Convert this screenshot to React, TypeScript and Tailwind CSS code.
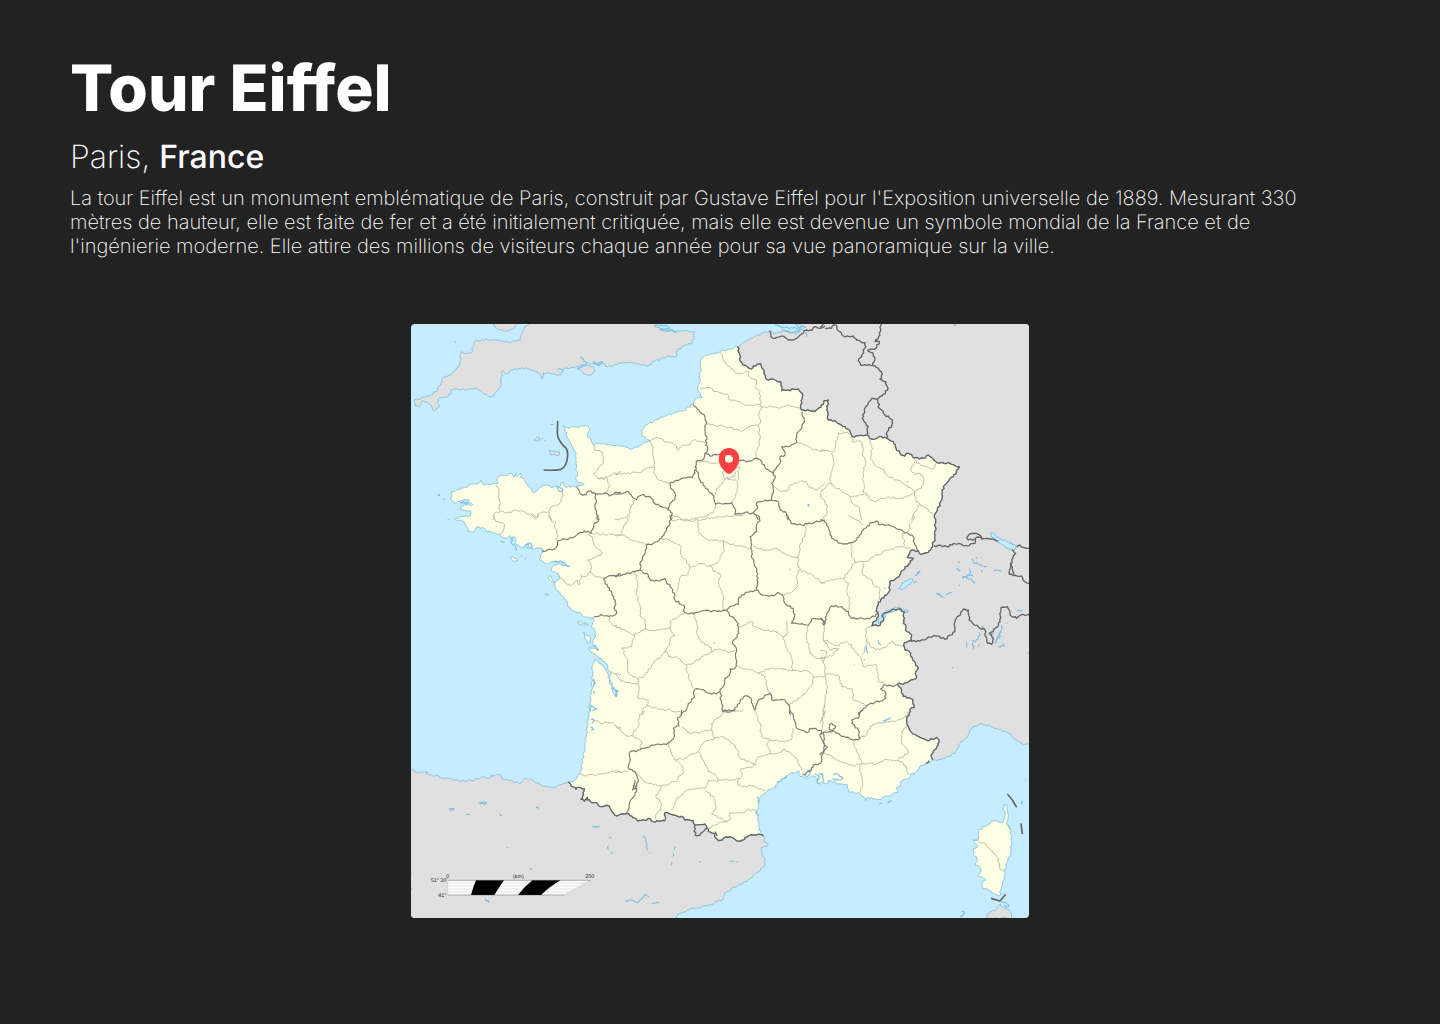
type Point = [number, number];

const parse = (text: string): Point[] =>
  text
    .trim()
    .split(/\s+/)
    .map((pair) => pair.split(",").map(Number) as Point);

const noise = (x: number, y: number) => {
  const n = Math.sin(x * 12.9898 + y * 78.233) * 43758.5453;
  return (n - Math.floor(n)) * 2 - 1;
};

// Breaks long segments into short irregular ones, as rivers and borders run.
const rough = (text: string, close = false) => {
  const points = parse(text);
  if (close) points.push(points[0]);
  const out: string[] = [];
  points.forEach(([x, y], i) => {
    out.push(`${x} ${y}`);
    const next = points[i + 1];
    if (!next) return;
    const dx = next[0] - x;
    const dy = next[1] - y;
    const length = Math.hypot(dx, dy);
    if (length > 160) return;
    const parts = Math.round(length / 6);
    for (let k = 1; k < parts; k++) {
      const t = k / parts;
      const shift = noise(x + k * 3, y + k * 5) * 3.2;
      out.push(
        `${(x + dx * t - (dy / length) * shift).toFixed(1)} ${(y + dy * t + (dx / length) * shift).toFixed(1)}`,
      );
    }
  });
  return `M${out.join("L")}`;
};

const COAST_WEST = `979,68 952,76 928,83 897,90 874,103 867,110 869,133 865,178 860,201 874,220 858,223 846,242 817,260 762,276 712,300 697,313 690,333 704,343 715,348 697,358 682,370 654,374 632,366 612,365 590,363 565,358 548,364 540,348 528,333 535,313 528,305 512,305 505,310 470,311 455,303 462,316 468,338 480,363 492,383 495,418 498,443 496,468 505,476 520,482 495,488 462,488 457,475 449,478 448,493 435,486 420,491 408,481 385,490 366,506 350,483 340,466 328,458 330,448 318,458 315,448 308,460 300,448 290,454 265,456 258,466 260,478 232,480 222,484 210,468 200,480 175,481 165,490 140,496 122,503 120,528 128,536 160,526 175,528 150,538 175,536 185,541 150,546 148,556 178,560 178,576 150,578 130,585 160,595 172,623 190,623 195,611 215,611 228,623 265,631 285,643 296,634 305,651 311,638 315,661 340,671 350,658 362,673 395,675 400,683 388,695 385,708 410,721 428,713 450,713 476,728 450,721 430,723 420,738 440,748 446,761 430,778 435,795 465,828 470,848 490,861 510,868 512,873 535,881 550,878 545,895 540,908 555,923 550,943 545,963 562,979 545,973 536,968 537,981 560,998 585,1018 597,1043 600,1073 608,1095 622,1100 616,1118 605,1098 595,1078 590,1048 575,1025 553,1005 547,1018 543,1073 535,1163 532,1188 522,1268 510,1338 500,1358 485,1373 471,1374`;
const PYRENEES = `471,1374 480,1386 492,1390 495,1396 505,1390 520,1394 518,1413 510,1426 520,1432 530,1420 528,1428 550,1436 575,1448 595,1446 600,1458 618,1476 630,1470 647,1468 662,1476 680,1491 707,1488 718,1484 727,1493 762,1490 762,1466 787,1473 817,1480 822,1488 847,1490 852,1503 882,1500 889,1513 892,1523 912,1531 915,1543 922,1550 937,1543 957,1538 982,1551 997,1548 1002,1540 1027,1533 1042,1530 1057,1536`;
const COAST_SOUTH = `1057,1536 1044,1518 1042,1478 1034,1468 1042,1448 1040,1428 1052,1413 1077,1396 1094,1390 1099,1378 1132,1353 1162,1340 1167,1358 1180,1360 1192,1363 1212,1356 1224,1380 1233,1372 1247,1380 1252,1370 1287,1380 1307,1380 1312,1403 1347,1408 1365,1430 1369,1420 1402,1426 1427,1416 1462,1406 1455,1393 1467,1388 1472,1370 1495,1363 1499,1350 1517,1343 1525,1328 1552,1316 1564,1308`;
const BORDER_EAST = `1564,1308 1560,1293 1582,1263 1584,1248 1577,1240 1549,1250 1527,1240 1502,1226 1489,1203 1487,1183 1495,1168 1497,1155 1509,1151 1505,1126 1477,1118 1470,1093 1460,1081 1487,1076 1517,1061 1514,1043 1522,1033 1505,1008 1499,988 1482,978 1479,958 1502,951 1502,933 1487,923 1485,908 1477,898 1481,883 1477,873 1480,863 1462,855 1442,857 1432,863 1417,870 1415,893 1402,906 1382,906 1385,895 1397,888 1402,873 1395,861 1402,835 1427,813 1437,798 1439,770 1457,761 1477,738 1507,703 1489,700 1502,678 1522,681 1527,690 1552,685 1565,668 1572,633 1574,593 1570,580 1577,563 1589,533 1597,488 1627,458 1645,428 1617,418 1577,415 1567,406 1552,393 1537,403 1510,402 1502,391 1487,388 1482,396 1470,393 1455,373 1447,353 1427,343 1412,338 1387,346 1367,333 1324,338 1317,320 1302,308 1272,290 1252,288 1247,258 1252,228 1239,230 1230,250 1212,263 1177,258 1169,253 1174,208 1162,195 1112,200 1109,173 1092,168 1067,166 1059,138 1050,120 1027,126 1020,135 997,123 987,110 987,93 979,68`;
const FRANCE = [COAST_WEST, PYRENEES, COAST_SOUTH, BORDER_EAST].join(" ");

const NEIGHBOURS = [
  `355,-6 335,23 328,48 295,56 265,48 230,46 190,53 185,83 170,88 150,83 147,118 135,138 120,151 95,163 90,178 80,198 55,216 30,223 10,228 12,246 28,246 32,231 50,235 62,246 70,260 85,246 80,238 88,220 100,220 120,210 122,196 145,198 185,194 210,200 235,218 250,216 258,200 268,188 270,168 275,140 283,151 305,138 345,131 370,140 390,156 392,165 397,146 430,150 450,153 455,138 440,136 490,130 520,122 545,118 560,124 575,118 590,128 630,118 662,115 710,128 727,113 772,96 797,96 795,83 817,66 844,56 850,23 817,20 792,23 752,16 730,6 745,-6`,
  `500,136 515,126 545,128 553,138 540,153 520,151`,
  `243,-2 262,16 285,20 305,16 318,-2`,
  `979,68 1012,48 1052,28 1075,21 1095,28 1120,18 1150,28 1175,16 1185,10 1150,-6 1870,-6 1870,1270 1855,1263 1827,1256 1787,1223 1757,1213 1709,1198 1677,1218 1667,1243 1647,1258 1632,1288 1602,1303 1564,1310 1400,1100 1100,300 950,160`,
  `-6,1328 12,1343 45,1345 70,1356 110,1363 150,1372 190,1368 215,1358 235,1362 240,1354 262,1351 278,1366 305,1371 325,1380 335,1368 358,1363 370,1371 400,1386 430,1390 471,1376 700,1400 1000,1500 1057,1536 1060,1553 1072,1560 1067,1568 1052,1570 1052,1588 1062,1603 1062,1623 1047,1640 1002,1673 947,1703 930,1731 882,1745 827,1760 797,1776 790,1790 -6,1790`,
  `1724,1782 1737,1763 1757,1756 1767,1740 1782,1753 1795,1758 1802,1782`,
  `368,348 375,343 383,338 387,348 376,352`,
  `416,379 430,382 444,381 444,394 430,391 418,391`,
];

const FRENCH_ISLES = [
  `1777,1442 1789,1444 1792,1480 1787,1500 1800,1520 1802,1560 1800,1590 1784,1620 1780,1665 1772,1690 1765,1716 1754,1712 1732,1700 1713,1688 1715,1670 1725,1668 1700,1655 1710,1640 1702,1625 1692,1622 1700,1610 1688,1590 1687,1575 1700,1565 1688,1548 1702,1545 1702,1520 1730,1502 1745,1490 1775,1495 1782,1475`,
  `300,699 308,698 320,710 308,712 300,706`,
  `412,760 422,758 430,775 420,772`,
  `500,892 530,901 530,904 502,898`,
  `518,924 538,940 540,955 530,958 520,942`,
  `401,810 410,809 413,814 403,814`,
];

type Tile = { x: number; y: number; region?: string; department?: string; nation?: string; water?: string };

const TILES: Tile[] = [
  {
    x: 0,
    y: -12,
    region: `497,500 505,515 515,526 525,524 533,513 550,518 575,522 590,520 595,528 612,518 630,516;553,520 556,540 552,560 556,580 560,600`,
    department: `548,376 550,390 570,395 578,410 577,430 560,450 546,462 560,475 590,478 594,500 585,515;560,475 590,472 605,462 630,456;255,495 265,505 262,530 268,550 265,575;245,600 250,580 268,575 300,578 310,570 330,572 345,580 365,582 375,592 385,580 415,575 420,560 440,555 452,545 455,515 445,500;415,575 412,590 425,600`,
    water: `132,65 135,69;418,314 427,313;392,354 396,356;402,361 404,364;80,526 86,524 84,529;97,537 100,539;508,111 525,125 520,135 500,148;545,125 555,130 575,125 570,132 548,133;145,545 165,552 175,545;435,500 450,515 455,505`,
  },
  {
    x: 612,
    y: -12,
    region: `234,254 252,270 270,290 275,305 270,330 275,350 272,375 278,385 270,400 285,408 300,403 320,405 345,402 370,420 385,420 395,425 425,415 440,425 450,442 475,460;475,460 485,440 495,430 495,410 510,405 500,380 525,378 545,368 545,345 560,325 568,300 562,275;270,400 262,420 243,425 240,440 250,460 255,480 270,500 285,518 297,530 302,553 330,550 350,548 362,570 360,583 390,578 415,578 428,565 425,548 445,543 470,541 470,530 475,510 470,490 480,475 475,460;470,541 490,545 495,570 510,575 520,600;243,440 240,460 232,472 200,475 180,482 165,490 167,505 180,520 180,540 165,550 160,570 172,580 168,600;0,522 20,522 40,515 48,525 65,538 80,525 105,530 118,550 140,560 160,570;415,578 425,590 430,600`,
    department: `316,95 325,120 345,140 360,158 385,160 400,155 405,172 425,180 420,200 435,215 435,240 440,260;255,207 285,203 300,215 340,225 345,240 370,245 390,255 435,255 440,262;440,262 470,260 500,262 515,255 540,262 557,265;440,262 432,280 437,300 430,320 435,345 430,380 420,400 428,415;275,312 310,318 345,322 380,335 400,322 430,315;103,360 115,380 115,410 118,440 115,455 125,475 140,482 165,490;100,362 130,352 145,362 175,370 190,390 200,378 225,375 235,360 270,368;0,462 40,458 70,458 90,448 118,440;0,600 25,595 45,580 50,555 60,540;168,600 200,600 235,598 275,590 297,572 302,553;245,422 280,425 310,432;297,530 305,505 325,485 330,475 365,480 370,500 362,530 352,548;330,475 322,460 330,450 355,450 372,440 370,465 372,480;335,470 340,478 358,470 360,455;545,368 575,375 595,390 630,393;475,500 500,515 520,510 525,495 550,487 575,485 578,495 600,510 630,490`,
    nation: `463,33 468,50 480,55 500,48 520,60 545,55 560,42 575,30 590,32 600,20 615,25 630,18`,
    water: `118,18 150,16 165,25 135,27 150,33 175,30 185,38;480,15 500,24 540,22 560,30;540,12 550,22 572,20;500,30 530,38 555,35;570,38 575,50;577,555 582,553 580,560`,
  },
  {
    x: 1227,
    y: -12,
    nation: `0,22 10,12;15,25 35,25 40,15 48,15 52,30 70,48 100,48 110,60 135,68 138,80 130,90 125,110 115,122 122,135 158,137 165,118 158,98 143,92 168,85 178,65 165,65 180,45 184,12;158,137 175,145 187,162 180,178 198,185 203,210 185,228 172,238;172,238 155,235 140,258 128,285 130,300 145,320 140,345;172,238 178,265 195,285 218,300 215,315 202,335 200,355`,
    department: `97,350 97,365 125,365 130,385 127,405 138,425 132,450 128,475 133,500 130,520;95,340 75,338 55,340 48,365 45,385 35,400 42,430 32,460 30,480 42,498;0,392 35,395;150,358 158,385 152,415 165,435 190,448 200,465 230,480 260,495 285,515;283,418 290,430 318,440 340,445 348,430;285,425 270,450 285,465 300,460 310,475 305,505 285,515 288,545;42,498 25,490 15,505 0,520 5,535 22,555 22,580 5,600;42,498 60,510 90,530 110,528 140,520 150,540 170,543 200,533 230,535 250,535 285,518;90,530 95,548 118,562 120,580 125,600;288,545 300,552 325,570 340,585;300,552 285,575 278,600`,
    water: `260,485 265,486;400,14 410,14`,
  },
  {
    x: 0,
    y: 573,
    region: `562,0 562,18 550,25 540,55 520,47 490,65 440,78 435,98 405,108 392,108;578,190 595,182 615,185 622,176 630,178;578,190 590,215 603,235 612,262 612,285 617,295 605,303 580,303 570,298 550,305`,
    department: `245,0 255,20 280,27 278,45 265,58;362,0 370,10 380,8 385,0;415,0 420,18 435,22 432,40 440,60 436,78;536,55 550,90 568,105 570,120 530,135 540,150 540,170 525,185 510,182 505,210 500,195 480,212 465,205 445,182;536,170 550,182 578,190;540,55 580,58 630,60;592,305 600,325 630,342;597,472 630,478`,
    water: `268,80 280,82;305,65 300,82 312,90 314,108;340,92 360,85 365,95 345,98;330,122 334,124;342,130 345,132;110,13 114,14;430,140 450,138 475,155;548,492 553,505 547,515 548,492;547,528 550,535 547,537;538,590 540,570 558,582 545,588;548,390 563,406;616,528 616,545;603,520 620,528`,
  },
  {
    x: 612,
    y: 573,
    region: `165,0 165,25 155,40 140,70 115,85 95,88 90,115 78,140 75,165 60,170 25,178 0,183;75,165 100,180 107,197 135,198 150,190 165,215 178,235 180,255 205,270 208,292 235,297 260,288 335,287;335,287 345,275 370,268 372,248 390,235 425,225 428,200 425,160 412,130 408,95 405,65 425,50 425,30 435,18 428,0;425,225 440,240 475,243 490,232 505,245 510,265 535,280 540,300 530,325 580,330 590,312 620,310 630,325;515,0 528,25 560,30 600,22 630,15;335,287 350,305 370,325 372,355 352,385 365,405 362,458 345,462 345,475 330,490 328,510 315,530 290,538 270,528 240,522 235,550 220,565 215,582 198,600;315,530 320,560 325,590 355,588 375,560 392,542 410,555 418,585 430,555 465,535 475,558 510,555 522,570 527,600`,
    department: `45,0 30,30 20,45 22,60 50,75 95,88;0,62 22,60;140,72 165,75 195,90 200,125 225,150 220,178 195,185 185,230;170,0 185,5 210,18 250,15 250,50 275,72 325,78 328,110 315,125 310,140 285,152 255,145 225,160;250,15 290,8 330,5 385,0;325,78 350,88 385,95 405,100;285,152 295,170 315,175 312,215 325,240 325,287;60,172 68,200 65,240 75,270 75,300 90,320 90,342;0,335 30,345 58,360 90,342 115,347 165,338 180,362 165,370 165,390 140,420 115,445 90,480 70,492 40,475 35,430 20,400 50,395 58,360;165,338 165,320 190,305 208,292;235,297 245,325 250,370 270,390 290,398 292,410;150,405 160,425 190,430 215,450 250,435 285,412 310,402 340,412 360,405;215,450 220,485 235,520;0,475 20,498 70,508 70,550 100,555 95,570 140,582 195,590;70,492 70,508;100,570 85,580 85,600;375,335 410,318 415,335 450,347 480,350 505,365 518,355 515,318;505,365 515,400 530,430 533,465;365,450 400,465 430,475 470,460 530,467 580,468 595,487 590,510 560,545 522,570;430,475 450,485 462,535;415,95 450,105 480,100 520,120 548,128 550,150 555,165 545,180 548,215 530,232 505,238;575,30 570,60 555,90 550,130;555,165 590,180 630,205;580,330 575,370 585,415 605,430 630,430;595,487 630,485;625,600 630,570`,
    water: `297,382 298,387;523,163 527,164;0,527 8,527;4,530 4,545`,
  },
  {
    x: 1227,
    y: 573,
    region: `0,15 20,25 35,70 70,88 85,85 110,75 125,50 150,25 170,18 180,30 200,30 220,35 245,45 280,65 285,90 295,108;0,310 8,315 10,330 15,325 20,295 35,272 65,275 85,290 95,310 130,312 165,305 172,290;115,600 140,572 165,562 198,550 195,530 182,522 190,510 220,515 233,508`,
    department: `95,80 95,120 105,140 70,190 0,203;105,142 135,140 200,105 240,95 272,98;130,145 128,180 155,195 165,215 180,220 180,240 172,262;70,190 85,205 80,230 90,265 85,290;278,0 265,50 245,55 255,92;85,0 120,20 130,30;15,320 10,375 25,380 50,392 80,378 100,400 120,425 130,455 170,450 175,500 195,505;155,333 138,340 140,390 125,420;140,375 155,398 180,405 195,398 215,378 225,390 252,390;10,375 30,405 55,400 40,420 0,430;0,405 20,410 10,440;0,430 15,450 15,475 55,480 65,515 95,520 100,555 140,572;15,475 22,520 15,560 10,600`,
    nation: `342,92 380,95 400,85 440,92 465,85 465,72 445,75 440,68 455,55 475,58 485,72 510,72 535,78;465,72 475,66 490,70;575,105 587,115 572,145 568,178 605,183 615,200 630,205;575,145 583,178;590,95 600,90 610,97 630,100;275,378 300,378 345,362 375,373 405,350 405,320 430,282 445,285 447,315 475,335 495,345 500,380 515,388 520,370 508,355 520,350 540,320 543,278 562,275 570,300 590,310 610,298 630,303`,
    water: `285,182 300,168 290,180 285,182;280,205 290,200;348,235 370,246 360,240 348,235;378,240 397,232;415,137 418,145;408,162 422,168;448,160 450,175 430,190 428,185 455,192 465,205;440,180 460,183;455,130 465,145 485,153 502,153;468,130 472,127;483,130 484,127;522,167 545,168;415,213 420,209;485,165 487,172;190,250 195,248;193,222 196,219;175,376 183,391;138,393 143,415;132,435 135,433;102,452 104,450;395,458 401,458;478,340 490,332;455,375 465,380 480,360 478,352;440,382 441,398;458,382 460,402;475,395 478,388;545,330 540,360 525,385 530,370 545,350;548,385 556,395;535,395 550,393;558,325 562,323;505,360 522,358;592,290 606,284;622,414 630,414`,
  },
  {
    x: 0,
    y: 1158,
    department: `540,28 560,32 570,40 605,38 630,58;508,190 520,197 545,192 550,197 600,185 630,183`,
    water: `113,298 130,297 116,302;166,313 176,315;203,280 226,278 225,281 208,283;264,313 272,317;375,292 384,296;287,411 292,413;355,476 364,478;545,348 566,349;592,384 602,385;592,407 593,418;600,425 605,432;223,566 234,577 226,572;0,485 0,500;0,536 3,540;541,28 550,32 542,40;538,52 548,58 540,60;45,185 47,193`,
  },
  {
    x: 612,
    y: 1158,
    region: `200,0 200,15 187,25 192,48 175,55 178,80 165,95 155,103 120,105 75,120 45,125 40,175 60,185 70,210 60,255 45,275 35,310;525,0 535,20 545,55 575,68 590,55 620,62 628,85 625,130 615,160 595,165 590,180 565,195;60,210 52,240 66,237 58,222;322,5 330,0 360,2`,
    department: `0,45 30,75 55,78 80,95 75,120;50,75 70,50 72,15 90,5;200,50 225,72 290,60 290,40 320,15 325,5 360,3 385,0;290,60 300,85 270,95 250,125 225,135 215,145 178,148 160,110 165,97;300,85 325,80 360,105 375,145 410,160 425,165;178,148 200,165 207,185 190,200 185,215 150,225 140,228 85,215 65,187;250,125 265,150 280,185 305,200 310,212 370,207;140,228 122,260 140,280 138,300 125,310 125,332;310,212 280,210 270,235 230,238 210,245 185,265 170,300;270,240 298,265 300,300 290,312 325,330 340,335;280,355 325,335 345,330 345,308 380,308 400,298 425,305;370,207 380,200 378,175 410,172 430,140 465,130 455,100 465,90 440,80 435,40 425,15 420,0;465,90 500,95 530,88 535,55;465,130 490,130 510,118 545,145 560,180;370,207 370,225 395,232 405,225 450,242;0,187 40,183;620,60 622,30 630,10`,
    nation: `240,345 240,375 255,375 277,355;300,365 306,378`,
    water: `85,378 95,400 97,422;103,430 106,428;184,410 178,418;175,430 173,440;170,456 170,465;253,455 258,456;344,455 357,456;364,456 370,455;30,572 45,571 70,578 85,562 90,553 103,560;112,580 133,580;486,220 505,205 515,200;426,260 432,278;423,305 430,318;575,180 590,178;600,190 612,200 607,215 615,222;562,192 580,198 585,185;610,190 625,192`,
  },
  {
    x: 1227,
    y: 1158,
    region: `0,70 40,62 60,75 100,90 120,85 115,60 95,40 95,30 115,25 115,8 130,0;28,50 35,40 47,48 38,62 28,58 28,50;0,72 10,95 22,112 0,135`,
    department: `15,0 0,40;100,90 110,125 125,155 120,185 128,215 122,248;0,130 30,135 60,155 100,168 130,160 155,158 165,165 200,148 215,153 235,150 258,168 265,195;120,85 140,75 150,50 175,38 190,40 240,30 270,5;235,148 265,128 245,95 245,65 262,50;460,390 495,400 520,425 535,450 540,478 555,480`,
    nation: `318,160 327,152`,
    water: `40,195 50,192 68,205 45,212 38,205;5,188 10,215;188,32 200,27 212,22;190,34 200,30;178,281 186,280;203,280 215,272;615,210 617,211;605,272 604,282 608,275;425,605 432,604 430,614 420,620;545,575 560,580 566,590 552,585;280,193 283,192;565,345 570,358`,
  },
];

const LAKES = [
  `1742,625 1767,643 1790,655 1821,668 1807,678 1785,673 1767,658 1739,633`,
  `1462,795 1472,778 1502,763 1507,770 1472,798`,
  `1402,898 1412,871 1452,847 1492,861 1489,867 1462,856 1427,867 1409,901`,
];

const lines = (list?: string) =>
  (list ?? "")
    .split(";")
    .filter(Boolean)
    .map((line) => rough(line))
    .join("");

const SCALE_LABELS = [
  { text: "0", x: 110, y: 1663 },
  { text: "(km)", x: 322, y: 1662 },
  { text: "250", x: 536, y: 1663 },
  { text: "51° 30'", x: 84, y: 1675 },
  { text: "41°", x: 94, y: 1718 },
];

function FranceMap() {
  return (
    <svg viewBox="0 0 1854 1782" className="block w-full" role="img" aria-label="Carte de France" strokeLinejoin="round">
      <rect width="1854" height="1782" fill="#c6ecff" />
      <g fill="#e0e0e0" stroke="#8fc3de" strokeWidth="3">
        {NEIGHBOURS.map((shape) => (
          <path key={shape} d={rough(shape, true)} />
        ))}
      </g>
      <g fill="#fefee5" stroke="#8fc8e0" strokeWidth="3">
        <path d={rough(FRANCE)} />
        {FRENCH_ISLES.map((shape) => (
          <path key={shape} d={rough(shape, true)} />
        ))}
      </g>
      <g fill="#c6ecff" stroke="#7fc0e2" strokeWidth="3">
        {LAKES.map((shape) => (
          <path key={shape} d={rough(shape, true)} />
        ))}
      </g>
      {TILES.map((tile) => (
        <g key={`${tile.x} ${tile.y}`} transform={`translate(${tile.x} ${tile.y})`} fill="none">
          <path d={lines(tile.department)} stroke="#b4b4a6" strokeWidth="2.6" />
          <path d={lines(tile.water)} stroke="#7fc0e2" strokeWidth="3.5" />
          <path d={lines(tile.region)} stroke="#7d7d76" strokeWidth="3.5" />
          <path d={lines(tile.nation)} stroke="#646464" strokeWidth="4" />
        </g>
      ))}
      <g fill="none" stroke="#646464" strokeWidth="4">
        <path d={rough(PYRENEES)} />
        <path d={rough(BORDER_EAST)} />
        <path d="M440 291L439 328Q440 348 458 366Q470 373 470 393Q468 428 450 436Q430 440 398 438" strokeWidth="5" />
        <path d="M1789 1410Q1805 1426 1817 1450M1830 1498L1834 1530M1740 1723L1767 1731L1784 1711" strokeWidth="5" />
      </g>
      <path d="M110 1669H538Q500 1690 460 1713H110Z" fill="#fff" stroke="#c8c8c8" strokeWidth="2" />
      <path d="M110 1677H520M110 1686H504M110 1695H490M110 1704H475" stroke="#d0d0d0" strokeWidth="2" />
      <path d="M195 1669H279Q264 1690 250 1713H180Q186 1690 195 1669ZM364 1669H449Q418 1686 390 1713H321Q340 1688 364 1669Z" fill="#000" />
      <path d="M110 1669H538M110 1713H460" stroke="#555" strokeWidth="1" />
      <g fill="#222" fontFamily="Liberation Sans, sans-serif" fontSize="16" textAnchor="middle">
        {SCALE_LABELS.map((label) => (
          <text key={label.text} x={label.x} y={label.y}>
            {label.text}
          </text>
        ))}
      </g>
    </svg>
  );
}

function Pin() {
  return (
    <svg viewBox="0 0 62 77" className="block w-[21px]" aria-hidden="true">
      <path
        fill="#ff4040"
        fillRule="evenodd"
        d="M31 0A31 31 0 0 1 62 31C62 49 50 63 38 74Q31 79 24 74C12 63 0 49 0 31A31 31 0 0 1 31 0ZM31 20A12 12 0 1 0 31 44A12 12 0 1 0 31 20Z"
      />
    </svg>
  );
}

export default function App() {
  return (
    <main className="flex min-h-screen flex-col bg-[#222222] px-[70px] pt-[50px] pb-[106px] font-['Inter',sans-serif] text-white [font-variant-ligatures:none] [text-rendering:geometricPrecision]">
      <header>
        <h1 className="text-[64px] leading-[78px] font-extrabold">Tour Eiffel</h1>
        <p className="mt-[9px] text-[32px] leading-10 font-extralight">
          Paris, <span className="font-medium">France</span>
        </p>
        <p className="mt-[9px] max-w-[1264px] text-xl leading-6 font-extralight">
          La tour Eiffel est un monument emblématique de Paris, construit par Gustave Eiffel pour l'Exposition
          universelle de 1889. Mesurant 330 mètres de hauteur, elle est faite de fer et a été initialement critiquée,
          mais elle est devenue un symbole mondial de la France et de l'ingénierie moderne. Elle attire des millions de
          visiteurs chaque année pour sa vue panoramique sur la ville.
        </p>
      </header>
      <section className="relative mt-[66px] w-full max-w-[618px] self-center overflow-hidden rounded">
        <FranceMap />
        <button
          type="button"
          aria-label="Tour Eiffel, Paris"
          className="absolute top-[23%] left-[51.4%] -translate-x-1/2 -translate-y-1/2"
        >
          <Pin />
        </button>
      </section>
    </main>
  );
}
